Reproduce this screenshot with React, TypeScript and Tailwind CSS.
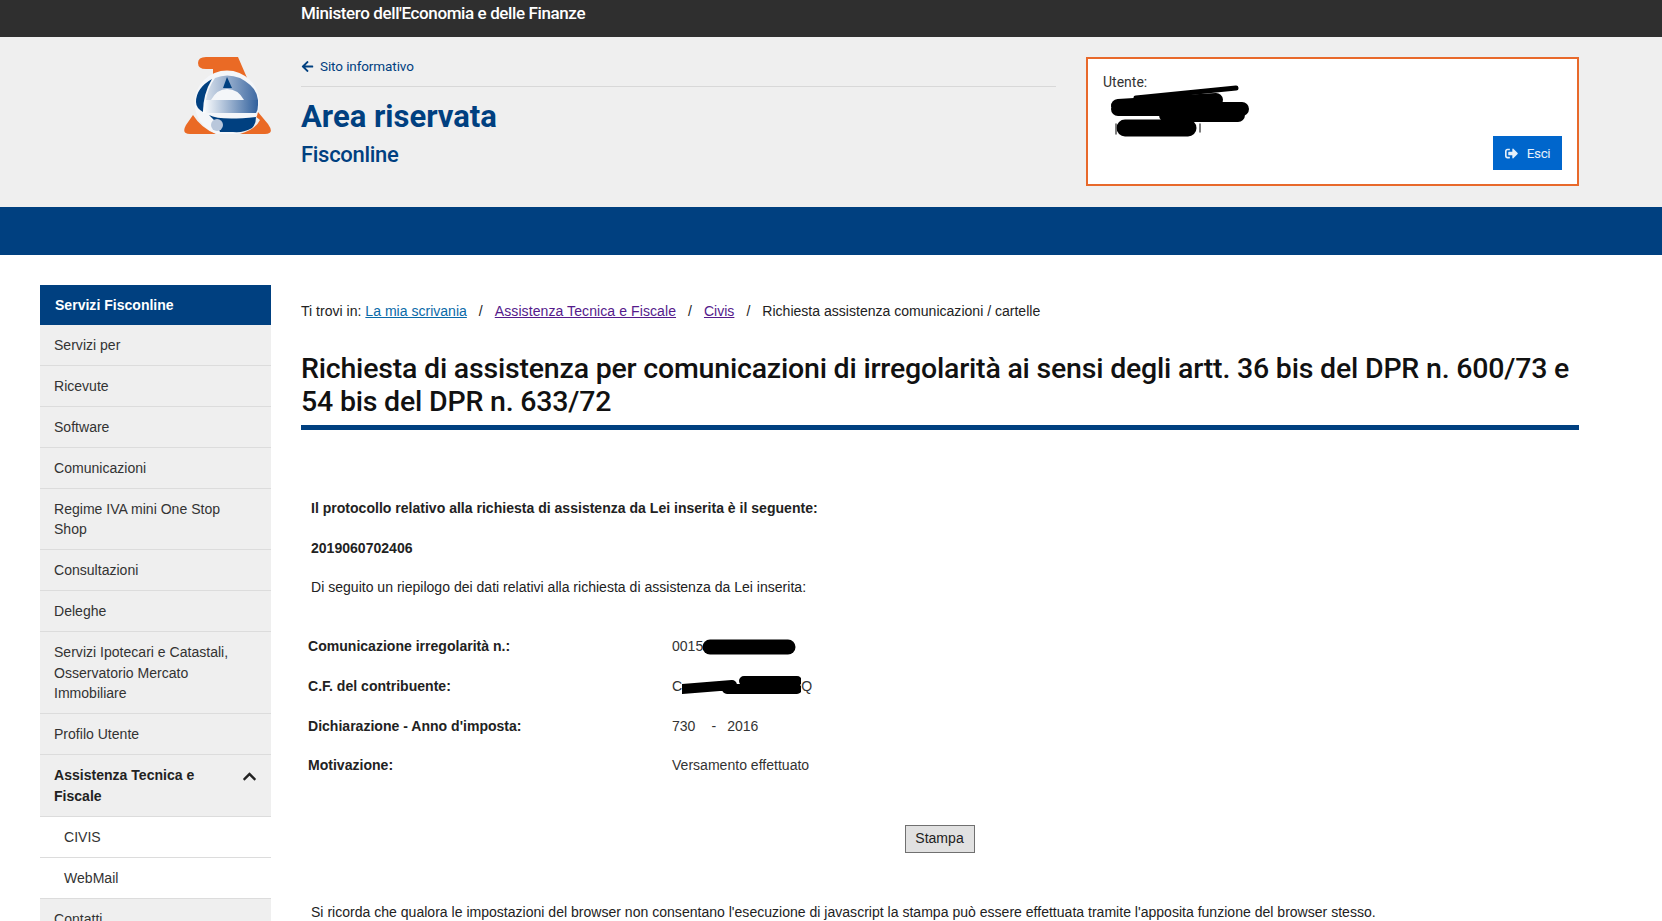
import React from 'react'
import { FaArrowLeft, FaChevronUp, FaSignOutAlt } from 'react-icons/fa'

const titleFont = "font-['Roboto',sans-serif]"

const Logo: React.FC = () => (
  <svg viewBox="14 7 87 77" className="w-[87px] h-[77px]">
    <defs>
      <linearGradient id="band" x1="0" x2="1" y1="0" y2="0">
        <stop offset="0" stopColor="#ffffff" />
        <stop offset="1" stopColor="#2f5f9c" />
      </linearGradient>
      <linearGradient id="arch" x1="0" x2="1" y1="0" y2="0">
        <stop offset="0" stopColor="#d5deea" />
        <stop offset="1" stopColor="#3f6aa3" />
      </linearGradient>
    </defs>
    <path d="M36 7H68L84 44L60 28H43V19H36Q28 19 28 13Q28 7 36 7Z" fill="#ea6a25" />
    <path d="M23 65L16 75Q11 84 20 84H46Q31 78 23 65Z" fill="#ea6a25" />
    <path d="M80 62H88L98 74Q105 84 95 84H70Q85 80 90 70Z" fill="#ea6a25" />
    <circle cx="57" cy="53" r="32.5" fill="#f4f6f9" />
    <path d="M45 28Q57 23 70 28Q87 37 88 50H74Q68 39 57 39Q47 39 41 50H36Q38 38 45 28Z" fill="url(#arch)" />
    <path d="M57 27L62 38H53Z" fill="#004080" />
    <path d="M42 29Q26 38 26 52Q26 58 33 62Q33 44 42 29Z" fill="#004080" />
    <path d="M35 50H88V55Q88 60 86 63H33Z" fill="url(#band)" />
    <path d="M39 65Q50 71 86 67Q86 74 82 78Q74 83 63 82H50L46 72Z" fill="#004080" />
    <circle cx="47" cy="75" r="6" fill="#b9c7db" />
  </svg>
)

const Scribble: React.FC = () => (
  <svg viewBox="0 0 170 64" className="w-[170px] h-[64px]">
    <g fill="none" stroke="#000" strokeLinecap="round" strokeLinejoin="round">
      <path d="M40 14L140 4" strokeWidth="5" />
      <path d="M22 22L120 16M22 25H146M70 31H142" strokeWidth="14" />
      <path d="M29 44H92" strokeWidth="17" />
      <path d="M20 40V50M104 40V48" strokeWidth="1.5" stroke="#555" />
    </g>
  </svg>
)

const Item: React.FC<{ label: string; sub?: boolean }> = ({ label, sub }) => (
  <li
    className={`border-b border-[#dcdcdc] pt-[10px] pb-[9.6px] leading-[20.4px] text-[#333] ${
      sub ? 'bg-white pl-[24px] pr-[27px]' : 'bg-[#efefef] pl-[14px] pr-[27px]'
    }`}
  >
    {label}
  </li>
)

const Row: React.FC<{ label: string; children: React.ReactNode }> = ({ label, children }) => (
  <div className="flex h-[39.7px] items-center">
    <div className="w-[364px] font-bold text-[#222]">{label}</div>
    <div className="flex items-center text-[#333]">{children}</div>
  </div>
)

const App: React.FC = () => {
  return (
    <div className="h-[921px] overflow-hidden bg-white font-['Liberation_Sans',Arial,sans-serif] text-[14.06px] text-[#222]">
      <div className="h-[37px] bg-[#2f2f2f]">
        <div className={`pl-[301px] text-[17px] font-medium leading-[27px] tracking-[-0.39px] text-white ${titleFont}`}>
          Ministero dell'Economia e delle Finanze
        </div>
      </div>

      <header className="flex h-[170px] bg-[#efefef] px-[40px]">
        <div className="flex w-[231px] justify-end pt-[20px]">
          <Logo />
        </div>
        <div className={`ml-[30px] w-[755px] text-[#004080] ${titleFont}`}>
          <div className="flex h-[50px] items-center gap-[6px] border-b border-[#d8d8d8] pb-[4px] pt-[14px] text-[13.5px] tracking-[-0.1px]">
            <FaArrowLeft className="text-[13px]" />
            Sito informativo
          </div>
          <div className="mt-[10px] text-[31px] font-bold leading-[40px]">Area riservata</div>
          <div className="mt-[3px] text-[22px] font-medium leading-[30px] tracking-[-0.3px]">Fisconline</div>
        </div>
        <div className="ml-[30px] mt-[20px] h-[129px] w-[493px]">
          <div className="relative h-full border-2 border-[#e8692b] bg-white">
            <div className={`pl-[15px] pt-[13px] text-[14px] leading-[20px] text-[#333] ${titleFont}`}>Utente:</div>
            <div className="absolute left-[8px] top-[25px]">
              <Scribble />
            </div>
            <div
              className={`absolute bottom-[14px] right-[15px] flex h-[34px] w-[69px] items-center justify-center gap-[9px] bg-[#0066cc] text-[13.5px] tracking-[-0.4px] text-[#e6f0fa] ${titleFont}`}
            >
              <FaSignOutAlt className="text-[13px]" />
              Esci
            </div>
          </div>
        </div>
      </header>

      <div className="h-[48px] bg-[#004080]" />

      <div className="flex px-[40px] pt-[30px]">
        <aside className="w-[231px] shrink-0">
          <div className="flex h-[40px] items-center bg-[#004080] pl-[15px] pt-[1px] font-bold text-white">Servizi Fisconline</div>
          <ul>
            <Item label="Servizi per" />
            <Item label="Ricevute" />
            <Item label="Software" />
            <Item label="Comunicazioni" />
            <Item label="Regime IVA mini One Stop Shop" />
            <Item label="Consultazioni" />
            <Item label="Deleghe" />
            <Item label="Servizi Ipotecari e Catastali, Osservatorio Mercato Immobiliare" />
            <Item label="Profilo Utente" />
            <li className="flex items-start justify-between border-b border-[#dcdcdc] bg-[#efefef] pb-[9.6px] pl-[14px] pr-[14px] pt-[10px] font-bold leading-[20.4px] text-[#222]">
              <span className="w-[160px]">Assistenza Tecnica e Fiscale</span>
              <FaChevronUp className="mt-[4px] text-[15px]" />
            </li>
            <Item label="CIVIS" sub />
            <Item label="WebMail" sub />
            <Item label="Contatti" />
          </ul>
        </aside>

        <main className="ml-[30px] w-[1278px]">
          <nav className="flex h-[53px] items-center pt-[1px] text-[#222]">
            Ti trovi in:
            <a className="ml-[4px] text-[#0a6aa8] underline">La mia scrivania</a>
            <span className="mx-[12px]">/</span>
            <a className="tracking-[0.07px] text-[#551a8b] underline">Assistenza Tecnica e Fiscale</a>
            <span className="mx-[12px]">/</span>
            <a className="text-[#551a8b] underline">Civis</a>
            <span className="mx-[12px]">/</span>
            Richiesta assistenza comunicazioni / cartelle
          </nav>
          <h1
            className={`border-b-[5px] border-[#004080] pb-[7px] pt-[14px] text-[28.5px] font-medium leading-[33px] tracking-[-0.2px] text-[#111] ${titleFont}`}
          >
            Richiesta di assistenza per comunicazioni di irregolarità ai sensi degli artt. 36 bis del DPR n. 600/73 e 54
            bis del DPR n. 633/72
          </h1>

          <div className="pl-[10px] pt-[68px]">
            <p className="font-bold leading-[20px]">Il protocollo relativo alla richiesta di assistenza da Lei inserita è il seguente:</p>
            <p className="mt-[20px] font-bold leading-[20px]">2019060702406</p>
            <p className="mt-[19px] leading-[20px]">Di seguito un riepilogo dei dati relativi alla richiesta di assistenza da Lei inserita:</p>
          </div>

          <div className="ml-[7px] mt-[30px]">
            <Row label="Comunicazione irregolarità n.:">
              0015
              <svg viewBox="0 0 96 20" className="-ml-[1px] h-[20px] w-[96px]">
                <path d="M8 10H86" stroke="#000" strokeWidth="15" strokeLinecap="round" />
              </svg>
            </Row>
            <Row label="C.F. del contribuente:">
              C
              <svg viewBox="0 0 119 26" className="h-[26px] w-[119px]">
                <path d="M0 15L50 11M45 15H115M62 7H115" stroke="#000" strokeWidth="10" strokeLinecap="round" fill="none" />
              </svg>
              Q
            </Row>
            <Row label="Dichiarazione - Anno d'imposta:">
              <span>730</span>
              <span className="ml-[16px] mr-[11px]">-</span>
              <span>2016</span>
            </Row>
            <Row label="Motivazione:">Versamento effettuato</Row>
          </div>

          <div className="mt-[39px] flex justify-center pr-[1px]">
            <button className="h-[28px] w-[70px] border border-[#707070] bg-[#e1e1e1] text-[#222]">Stampa</button>
          </div>

          <p className="mt-[49px] pl-[10px] leading-[20px]">
            Si ricorda che qualora le impostazioni del browser non consentano l'esecuzione di javascript la stampa può essere effettuata tramite l'apposita funzione del browser stesso.
          </p>
        </main>
      </div>
    </div>
  )
}

export default App
